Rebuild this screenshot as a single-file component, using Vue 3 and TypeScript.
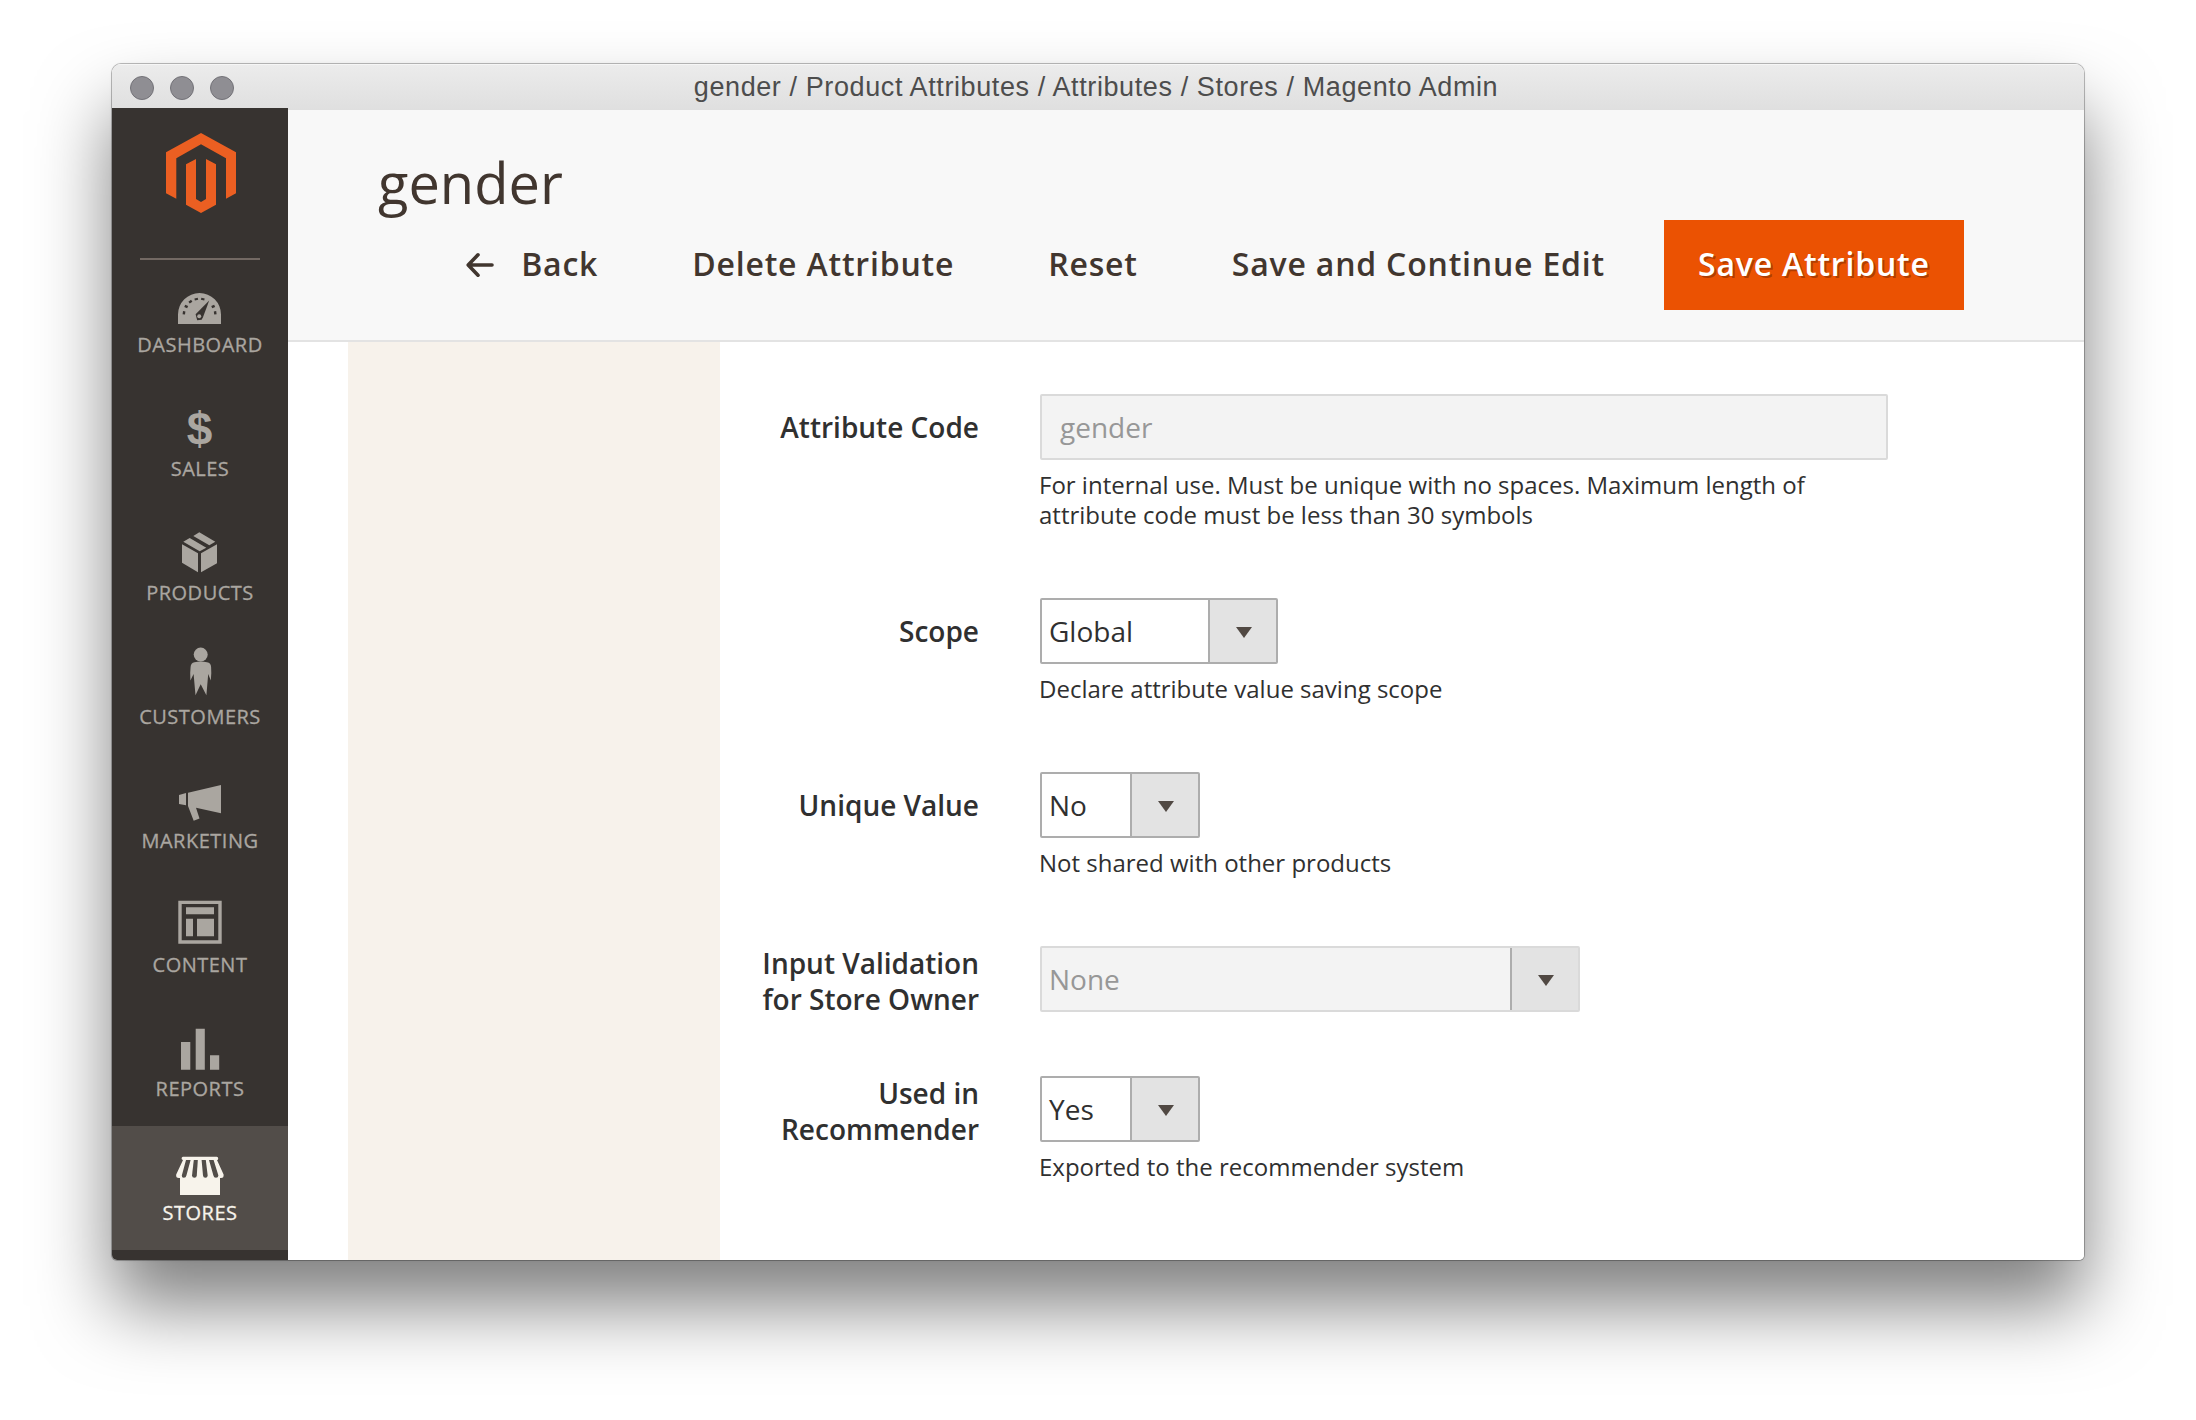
<script setup lang="ts">
interface MenuItem {
  id: string
  label: string
  active?: boolean
}

interface Field {
  label: string[]
  kind: 'input' | 'select'
  value: string
  width: number
  note?: string
  disabled?: boolean
}

const title = 'gender / Product Attributes / Attributes / Stores / Magento Admin'

const menu: MenuItem[] = [
  { id: 'dashboard', label: 'Dashboard' },
  { id: 'sales', label: 'Sales' },
  { id: 'products', label: 'Products' },
  { id: 'customers', label: 'Customers' },
  { id: 'marketing', label: 'Marketing' },
  { id: 'content', label: 'Content' },
  { id: 'reports', label: 'Reports' },
  { id: 'stores', label: 'Stores', active: true },
]

const fields: Field[] = [
  {
    label: ['Attribute Code'],
    kind: 'input',
    value: 'gender',
    width: 848,
    disabled: true,
    note: 'For internal use. Must be unique with no spaces. Maximum length of attribute code must be less than 30 symbols',
  },
  { label: ['Scope'], kind: 'select', value: 'Global', width: 238, note: 'Declare attribute value saving scope' },
  { label: ['Unique Value'], kind: 'select', value: 'No', width: 160, note: 'Not shared with other products' },
  { label: ['Input Validation', 'for Store Owner'], kind: 'select', value: 'None', width: 540, disabled: true },
  { label: ['Used in', 'Recommender'], kind: 'select', value: 'Yes', width: 160, note: 'Exported to the recommender system' },
]
</script>

<template>
  <div class="desktop">
    <div class="window">
      <header class="titlebar">
        <div class="lights"><i></i><i></i><i></i></div>
        <div class="titlebar-text">{{ title }}</div>
      </header>

      <div class="body">
        <nav class="sidebar">
          <div class="logo">
            <svg width="70" height="80" viewBox="0 0 70 80" fill="#eb5f22">
              <path d="M35 0L70 19.3V60.3L60 65.7V25.3L35 11.3L10.3 25.3V65.7L0 60.3V19.3Z" />
              <path d="M20 31.3L30 26V66L35 69L40 66V26L50 31.3V71.7L35 80L20 71.7Z" />
            </svg>
          </div>
          <div class="separator"></div>
          <a v-for="item in menu" :key="item.id" class="item" :class="{ active: item.active }">
            <span v-if="item.id === 'sales'" class="icon dollar">$</span>
            <svg v-else class="icon" width="60" height="60" viewBox="0 0 60 60" fill="currentColor">
              <g v-if="item.id === 'dashboard'">
                <path d="M8 56V46.5A21.5 21.5 0 0 1 51 46.5V56Z" />
                <g fill="#373330">
                  <rect x="-1.2" y="-1.6" width="2.4" height="3.2" transform="translate(14 44.8) rotate(8)" />
                  <rect x="-1.6" y="-1.2" width="3.2" height="2.4" transform="translate(16.2 38.5) rotate(25)" />
                  <rect x="-1.6" y="-1.2" width="3.2" height="2.4" transform="translate(20.4 33.7) rotate(-35)" />
                  <rect x="-1.7" y="-1.1" width="3.4" height="2.2" transform="translate(26.3 31.1) rotate(-12)" />
                  <rect x="-1.7" y="-1.1" width="3.4" height="2.2" transform="translate(32.8 31.1) rotate(12)" />
                  <rect x="-1.6" y="-1.2" width="3.2" height="2.4" transform="translate(43.2 38.5) rotate(-25)" />
                  <rect x="-1.2" y="-1.6" width="2.4" height="3.2" transform="translate(45.2 44.8) rotate(-8)" />
                  <path d="M39.2 32.4L33 49.2L31.6 51.8L27.2 52.2L25.6 46.2Z" />
                </g>
                <circle cx="29.2" cy="48.2" r="2" />
              </g>
              <g v-else-if="item.id === 'products'">
                <path d="M12 28.3L28 37.3V56.3L12 46.7ZM31 37.3L47 28.3V47.3L31 56.3Z" />
                <path d="M13.3 25.7L19.7 22L36.3 31.7L29.7 35.3ZM23.3 20L29.3 16.3L45.3 25.7L39.3 29.3Z" />
              </g>
              <g v-else-if="item.id === 'customers'">
                <circle cx="30.7" cy="14.6" r="7" />
                <path d="M24.5 22.2Q30.7 20.8 37 22.2Q41 23 41.1 27L41.3 33L40.8 40.6L38.2 34L36.4 55.2L30.7 44.3L25.5 55.2L23.6 34L20.4 40.6L20.2 33L20.6 27Q20.8 23 24.5 22.2Z" />
              </g>
              <path v-else-if="item.id === 'marketing'" d="M9 31L16 29V41.3L9 40ZM18 28.7L51 21V49.3L26 43.7L29.5 54.6L23.7 56.8L18 42Z" />
              <g v-else-if="item.id === 'content'">
                <path fill-rule="evenodd" d="M8.3 12.7H51.7V55.8H8.3ZM11.7 16.1V52.3H48.3V16.1Z" />
                <path d="M16 19.3H44V26.3H16ZM16 30.7H23V48.2H16ZM27 30.7H44V48.2H27Z" />
              </g>
              <path v-else-if="item.id === 'reports'" d="M11 30H20.3V57.7H11ZM25.7 16.7H34.8V57.7H25.7ZM40 43.3H49.2V57.7H40Z" />
              <g v-else>
                <path d="M13 20.7H46.7Q48.2 20.7 48.2 22.4T47 24L53.6 38.5Q54 42 51 42H50V59H10V42H9Q5.6 42 6.2 38.5L13 24Q11.6 23.8 11.6 22.4T13 20.7Z" />
                <g fill="#524d49">
                  <path d="M16 24H20.6L16.4 39.5Q16 41.8 13.8 41.8T11.8 39.5Z" />
                  <path d="M23.8 24H27.8L26.8 39.5Q26.6 41.8 24.4 41.8T22 39.5Z" />
                  <path d="M31.6 24H35.8L37.7 39.5Q37.6 41.8 35.4 41.8T33 39.5Z" />
                  <path d="M39 24H43.6L48.4 39.5Q48.2 41.8 46 41.8T43.4 39.5Z" />
                </g>
              </g>
            </svg>
            <span class="item-label">{{ item.label }}</span>
          </a>
        </nav>

        <main class="main">
          <section class="page-header">
            <h1>gender</h1>
            <div class="actions">
              <button class="btn back">
                <svg width="30" height="26" viewBox="0 0 30 26" fill="none" stroke="#41362f" stroke-width="3.6" stroke-linecap="round" stroke-linejoin="round">
                  <path d="M13 2.8L3.2 13L13 23.2M3.6 13H27" />
                </svg>
                Back
              </button>
              <button class="btn">Delete Attribute</button>
              <button class="btn">Reset</button>
              <button class="btn">Save and Continue Edit</button>
              <button class="btn primary">Save Attribute</button>
            </div>
          </section>

          <section class="content">
            <aside class="panel"></aside>
            <form class="form">
              <div v-for="f in fields" :key="f.value" class="field" :class="{ bare: !f.note }">
                <label :class="{ double: f.label.length > 1 }">
                  <span v-for="line in f.label" :key="line">{{ line }}</span>
                </label>
                <div class="control">
                  <div class="box" :class="[f.kind, { disabled: f.disabled }]" :style="{ width: f.width + 'px' }">
                    <span class="value">{{ f.value }}</span>
                    <span v-if="f.kind === 'select'" class="toggle">
                      <svg width="16" height="11" viewBox="0 0 16 11"><path d="M0 0H16L8 11Z" fill="#514943" /></svg>
                    </span>
                  </div>
                  <p v-if="f.note" class="note">{{ f.note }}</p>
                </div>
              </div>
            </form>
          </section>
        </main>
      </div>
    </div>
  </div>
</template>

<style>
body {
  background: #fff;
}
</style>

<style scoped>
* {
  box-sizing: border-box;
}
.desktop {
  width: 2196px;
  height: 1420px;
  padding: 64px 112px 160px;
  overflow: hidden;
  background: #fff;
  font-family: "Open Sans", sans-serif;
}
.window {
  display: flex;
  flex-direction: column;
  width: 1972px;
  height: 1196px;
  border-radius: 9px 9px 5px 5px;
  box-shadow: 0 0 0 1px rgba(0, 0, 0, 0.24), 0 0 3px rgba(0, 0, 0, 0.1), 0 46px 74px rgba(0, 0, 0, 0.5);
  overflow: hidden;
}
.titlebar {
  display: flex;
  flex: none;
  align-items: center;
  height: 46px;
  padding: 0 18px;
  background: linear-gradient(#ececec, #dfdfdf);
  box-shadow: inset 0 1px 0 #f6f6f6;
}
.lights {
  display: flex;
  gap: 16px;
  width: 180px;
  padding-top: 2px;
}
.lights i {
  width: 24px;
  height: 24px;
  border: 1px solid #737278;
  border-radius: 50%;
  background: #8f8e93;
}
.titlebar-text {
  flex: 1;
  padding-right: 184px;
  color: #4d4d4d;
  font: 27px/46px "Liberation Sans", sans-serif;
  letter-spacing: 0.6px;
  text-align: center;
  white-space: nowrap;
}
.body {
  display: flex;
  flex: 1;
  min-height: 0;
}
.sidebar {
  flex: none;
  width: 176px;
  margin-top: -2px;
  background: #373330;
  z-index: 1;
}
.logo {
  height: 150px;
  padding: 25px 0 0 54px;
}
.logo svg {
  display: block;
}
.separator {
  height: 2px;
  margin: 0 28px -2px;
  background: #736963;
}
.item {
  display: flex;
  flex-direction: column;
  align-items: center;
  height: 124px;
  padding-top: 10px;
  color: #aaa6a0;
}
.item.active {
  background: #524d49;
  color: #f7f3eb;
}
.icon {
  display: block;
}
.dollar {
  width: 60px;
  height: 60px;
  padding: 10px 1px 0 0;
  font: bold 46px/54px "Liberation Sans", sans-serif;
  text-align: center;
}
.item-label {
  margin-top: 4px;
  font-size: 20px;
  line-height: 26px;
  letter-spacing: 0.5px;
  text-transform: uppercase;
  -webkit-text-stroke: 0.3px currentColor;
}
.main {
  display: flex;
  flex: 1;
  flex-direction: column;
  background: #fff;
}
.page-header {
  flex: none;
  height: 232px;
  padding: 34px 120px 0 90px;
  border-bottom: 2px solid #e3e3e3;
  background: #f8f8f8;
  color: #41362f;
}
h1 {
  margin: 0;
  font-size: 56px;
  font-weight: 400;
  line-height: 76px;
}
.actions {
  display: flex;
  justify-content: flex-end;
  gap: 26px;
}
.btn {
  display: flex;
  align-items: center;
  height: 90px;
  padding: 0 33px 2px 35px;
  border: 0;
  background: none;
  color: #41362f;
  font: 600 32px/88px "Open Sans", sans-serif;
  letter-spacing: 0.8px;
  white-space: nowrap;
}
.back svg {
  margin: 2px 26px 0 0;
}
.primary {
  width: 300px;
  padding-left: 34px;
  background: #eb5202;
  color: #fff;
  text-shadow: 2px 2px 0 rgba(0, 0, 0, 0.25);
}
.content {
  display: flex;
  flex: 1;
  padding-left: 60px;
}
.panel {
  flex: none;
  width: 372px;
  background: #f7f2eb;
}
.form {
  padding-top: 52px;
  color: #303030;
}
.field {
  display: grid;
  grid-template-columns: 259px 848px;
  column-gap: 61px;
  align-items: start;
  margin-bottom: 68px;
}
.field.bare {
  margin-bottom: 59px;
}
label {
  padding-top: 15px;
  font-size: 28px;
  font-weight: 600;
  line-height: 36px;
  text-align: right;
}
label span {
  display: block;
}
label.double {
  margin-top: -1px;
  padding-top: 0;
}
.box {
  display: flex;
  justify-content: space-between;
  height: 66px;
  border: 2px solid #adadad;
  border-radius: 2px;
  background: #fff;
  font-size: 28px;
  line-height: 62px;
}
.value {
  padding-left: 7px;
}
.input .value {
  padding-left: 18px;
}
.box.disabled {
  border-color: #dadada;
  background: #f3f3f3;
  color: #979797;
}
.toggle {
  display: flex;
  justify-content: center;
  width: 68px;
  padding: 27px 0 0 2px;
  border-left: 2px solid #adadad;
  background: #e3e3e3;
}
.note {
  margin: 10px 0 0 -1px;
  font-size: 24px;
  line-height: 30px;
}
</style>
